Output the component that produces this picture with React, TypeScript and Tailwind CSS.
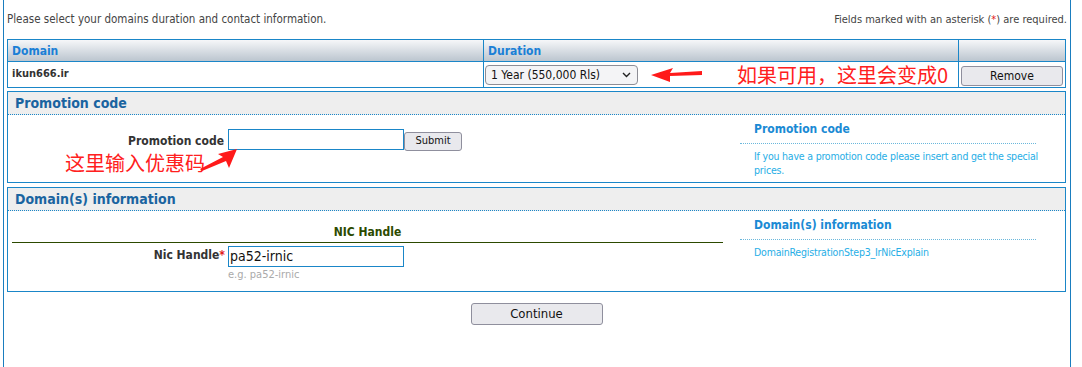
import React from 'react';

const font = "font-['Tahoma','DejaVu_Sans_Condensed','Liberation_Sans',sans-serif]";
const cjk = "font-['Noto_Sans_CJK_SC','Noto_Sans',sans-serif]";

function Section({ title, children }: { title: string; children: React.ReactNode }) {
  return (
    <div className="border border-[#1a86c8]">
      <div className="h-[23px] border-b border-dotted border-[#1a86c8] bg-[#eeeeee] px-[7px] text-[14px] font-bold leading-[22px] text-[#1a64a0]">
        {title}
      </div>
      {children}
    </div>
  );
}

function SideNote({ title, text }: { title: string; text: React.ReactNode }) {
  return (
    <div className="w-[310px] pl-[4px] pt-[5px]">
      <div className="mr-[10px] border-b border-dotted border-[#6bb8dc] pb-[5px] pl-[14px] text-[12px] font-bold text-[#1a8ad4]">{title}</div>
      <div className="pl-[14px] pr-[4px] pt-[5px] text-[10.5px] leading-[14px] tracking-[-0.2px] text-[#27aee6]">{text}</div>
    </div>
  );
}

export default function App() {
  return (
    <div className={`${font} h-[367px] w-[1082px] bg-white`}>
      <div className="ml-[3px] h-[367px] w-[1068px] border-x border-[#1a7dbf] pl-[3px] pr-[3px]">
        <div className="flex h-[39px] items-end justify-between pb-[11px] text-[11px] text-[#444]">
          <span className="text-[11.5px]">Please select your domains duration and contact information.</span>
          <span>
            Fields marked with an asterisk (<span className="text-[#e02020]">*</span>) are required.
          </span>
        </div>

        {/* Domain table */}
        <table className="w-[1059px] border-collapse">
          <thead>
            <tr className="h-[22px] bg-gradient-to-b from-[#f6f7f9] to-[#b9c3cd] text-left text-[12px] font-bold text-[#1a7fd6]">
              <th className="w-[476px] border border-[#1a86c8] px-[4px] py-0">Domain</th>
              <th className="w-[475px] border border-[#1a86c8] px-[4px] py-0">Duration</th>
              <th className="border border-[#1a86c8] p-0"></th>
            </tr>
          </thead>
          <tbody>
            <tr className="h-[26px]">
              <td className="border border-[#1a86c8] px-[4px] text-[11px] font-bold text-[#333]">ikun666.ir</td>
              <td className="border border-[#1a86c8] px-[1px]">
                <div className="flex items-center">
                  <div className="flex h-[20px] w-[153px] items-center justify-between rounded-[4px] border border-[#8d8d95] bg-[#f4f4f6] pl-[5px] pr-[6px] text-[12px] text-[#111]">
                    <span>1 Year (550,000 Rls)</span>
                    <svg width="9" height="6" viewBox="0 0 9 6" fill="none">
                      <path d="M1 1l3.5 3.5L8 1" stroke="#222" strokeWidth="1.4" />
                    </svg>
                  </div>
                  <svg className="ml-[13px]" width="52" height="16" viewBox="0 0 52 16">
                    <polygon points="0,8 22,1 19,6 51,4 51,8 19,9 19,15" fill="#ff1a1a" />
                  </svg>
                  <span className={`${cjk} ml-[34px] text-[20px] leading-[22px] text-[#ff2020]`}>如果可用，这里会变成0</span>
                </div>
              </td>
              <td className="border border-[#1a86c8] px-[2px]">
                <button className="h-[20px] w-[102px] rounded-[3px] border border-[#8f8f9d] bg-[#e9e9ed] text-[12px] text-[#111]">
                  Remove
                </button>
              </td>
            </tr>
          </tbody>
        </table>

        <div className="mt-[3px] w-[1059px]">
          <Section title="Promotion code">
            <div className="flex h-[67px]">
              <div className="w-[728px] pt-[14px]">
                <div className="flex items-start">
                  <label className="w-[216px] pt-[3px] text-right text-[12px] font-bold text-[#333]">Promotion code</label>
                  <input className="ml-[4px] h-[21px] w-[176px] border border-[#1a86c8] px-[2px] text-[14px] outline-none" />
                  <button className="mt-[3px] h-[19px] w-[58px] rounded-[3px] border border-[#8f8f9d] bg-[#e9e9ed] text-[11px] text-[#111]">
                    Submit
                  </button>
                </div>
                <div className="flex items-center">
                  <span className={`${cjk} ml-[57px] text-[20px] leading-[24px] text-[#ff2020]`}>这里输入优惠码</span>
                  <svg className="-mt-[6px] ml-[-6px]" width="40" height="24" viewBox="0 0 40 24">
                    <polygon points="38,1 30,20 27,13 3,23 1,21 24,9 19,6" fill="#ff1a1a" />
                  </svg>
                </div>
              </div>
              <SideNote
                title="Promotion code"
                text="If you have a promotion code please insert and get the special prices."
              />
            </div>
          </Section>
        </div>

        <div className="mt-[4px] w-[1059px]">
          <Section title="Domain(s) information">
            <div className="flex h-[80px]">
              <div className="w-[728px] pl-[4px] pt-[12px]">
                <div className="w-[711px] border-b border-[#2c4a00] pb-[1px] text-center text-[12px] font-bold text-[#2c4a00]">
                  NIC Handle
                </div>
                <div className="mt-[1px] flex items-start">
                  <label className="w-[213px] pt-[2px] text-right text-[12px] font-bold text-[#333]">
                    Nic Handle<span className="text-[#e02020]">*</span>
                  </label>
                  <div className="ml-[3px]">
                    <input
                      defaultValue="pa52-irnic"
                      className="h-[21px] w-[176px] border border-[#1a86c8] px-[1px] text-[14px] text-[#111] outline-none"
                    />
                    <div className="-mt-[1px] text-[11px] text-[#aaa]">e.g. pa52-irnic</div>
                  </div>
                </div>
              </div>
              <SideNote title="Domain(s) information" text="DomainRegistrationStep3_IrNicExplain" />
            </div>
          </Section>
        </div>

        <div className="mt-[11px] flex w-[1059px] justify-center">
          <button className="h-[22px] w-[132px] rounded-[3px] border border-[#8f8f9d] bg-[#e9e9ed] text-[13px] text-[#111]">
            Continue
          </button>
        </div>
      </div>
    </div>
  );
}
